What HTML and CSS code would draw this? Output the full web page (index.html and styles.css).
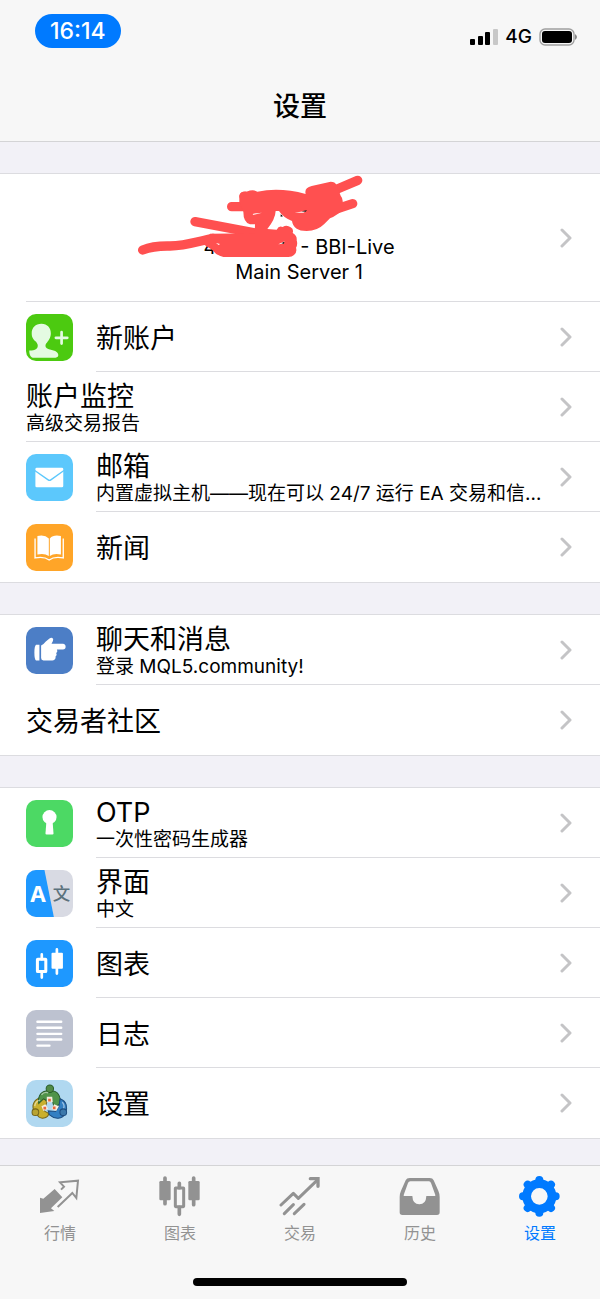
FILE: index.html
```html
<!DOCTYPE html>
<html lang="zh-CN">
<head>
  <meta charset="UTF-8" />
  <meta name="viewport" content="width=device-width, initial-scale=1" />
  <title>设置</title>
  <link rel="stylesheet" href="styles.css">
</head>
<body>
  <svg class="defs" width="0" height="0" aria-hidden="true">
    <symbol id="chevron" viewBox="0 0 12 20">
      <path d="M2 2l8 8-8 8" fill="none" stroke="#c4c4c6" stroke-width="3" stroke-linecap="round" stroke-linejoin="round" />
    </symbol>
  </svg>

  <header class="header">
    <div class="status">
      <span class="clock">16:14</span>
      <div class="signal">
        <svg width="28" height="18" viewBox="0 0 28 18">
          <rect x="0" y="11" width="5" height="6" rx="1" />
          <rect x="8" y="8" width="5" height="9" rx="1" />
          <rect x="15" y="4" width="5" height="13" rx="1" />
          <rect x="23" y="1" width="5" height="16" rx="1" fill="#c8c8c8" />
        </svg>
        <span>4G</span>
        <svg width="39" height="18" viewBox="0 0 39 18">
          <rect x="1" y="1" width="34" height="16" rx="5" fill="none" stroke="#a0a0a0" stroke-width="1.4" />
          <rect x="3" y="3" width="30" height="12" rx="3" />
          <path d="M36 6q4 3 0 6z" fill="#888" />
        </svg>
      </div>
    </div>
    <h1>设置</h1>
  </header>

  <main class="main">
    <section class="group">
      <a href="#" class="row account">
        <div class="body">
          <div class="info">
            <div class="name">&nbsp;</div>
            <div>4<span class="masked"></span>- BBI-Live</div>
            <div>Main Server 1</div>
          </div>
          <svg class="chev"><use href="#chevron" /></svg>
          <svg class="scribble" viewBox="0 27 870 363" aria-hidden="true">
            <g fill="none" stroke="#ff5050" stroke-linecap="round" stroke-linejoin="round">
              <path stroke-width="28" d="M68 255C90 246 110 242 150 243C200 242 235 228 280 220M225 170L400 203M335 125H420M372 94H400M645 75L713 46M640 135L698 116" />
            </g>
            <g fill="#ff5050">
              <path d="M358 92Q362 78 380 80Q400 72 412 80Q480 66 557 87Q552 68 575 63L632 50Q645 50 650 60L662 92Q672 104 666 120L680 125Q650 152 630 160L612 178Q592 198 560 198Q520 198 516 168Q490 158 477 138H467Q466 162 442 192L470 194Q477 180 488 186Q500 178 512 187Q522 192 518 204Q532 212 530 226Q534 238 528 248Q532 262 522 270Q515 277 502 276H310Q290 272 276 254L250 238L270 206L404 205L405 178H390Q370 172 370 140L358 112Z" />
            </g>
            <path d="M400 146L426 143L398 150zM524 143L560 137L550 143zM475 238L494 229L490 236zM288 234L300 237L296 240z" fill="#fff" />
            <path d="M482 148l7 6-7 1zM545 139l16-3-4 4zM484 235l9-5-1 6z" />
          </svg>
        </div>
      </a>
      <a href="#" class="row">
        <svg class="icon" viewBox="0 0 140 140">
          <rect width="140" height="140" rx="30" fill="#4cca10" />
          <path d="M46 29C64 29 74 42 74 57C74 72 66 80 60 88C57 93 57 99 62 102C72 108 94 107 96 121C97 127 94 130 88 130H20C11 130 9 112 10 109C20 109 31 107 34 100C37 94 34 89 30 83C22 76 17 70 17 57C17 41 28 29 46 29Z" fill="#e4fbe2" />
          <path d="M106 54v34M89 71h34" stroke="#e4fbe2" stroke-width="8" stroke-linecap="round" />
        </svg>
        <div class="body"><div class="text"><div class="title">新账户</div></div><svg class="chev"><use href="#chevron" /></svg></div>
      </a>
      <a href="#" class="row">
        <div class="body"><div class="text"><div class="title">账户监控</div><div class="sub">高级交易报告</div></div><svg class="chev"><use href="#chevron" /></svg></div>
      </a>
      <a href="#" class="row">
        <svg class="icon" viewBox="0 0 140 140">
          <rect width="140" height="140" rx="30" fill="#5cc8fc" />
          <rect x="28" y="41" width="83" height="58" rx="4" fill="#fff" />
          <path d="M26 49L66 77Q70 80 74 77L113 49" fill="none" stroke="#5cc8fc" stroke-width="4" />
        </svg>
        <div class="body"><div class="text"><div class="title">邮箱</div><div class="sub">内置虚拟主机——现在可以 24/7 运行 EA 交易和信…</div></div><svg class="chev"><use href="#chevron" /></svg></div>
      </a>
      <a href="#" class="row">
        <svg class="icon" viewBox="0 0 140 140">
          <rect width="140" height="140" rx="30" fill="#ffa528" />
          <path d="M34 36Q56 31 68 43V95Q54 86 34 91ZM104 36Q82 31 71 43V95Q84 86 104 91Z" fill="#fff" />
          <path d="M27 43V101Q54 96 69 107Q84 96 111 101V43" fill="none" stroke="#fff" stroke-width="4" />
        </svg>
        <div class="body"><div class="text"><div class="title">新闻</div></div><svg class="chev"><use href="#chevron" /></svg></div>
      </a>
    </section>

    <section class="group">
      <a href="#" class="row">
        <svg class="icon" viewBox="0 0 140 140">
          <rect width="140" height="140" rx="30" fill="#4c7ec6" />
          <path d="M30 53H40V100H30Q25 97 25 76Q25 57 30 53Z" fill="#fff" />
          <path d="M45 55Q53 51 59 43L70 34Q77 29 81 36Q82 41 76 50H110Q118 51 118 59Q118 67 110 67H92Q96 72 90 78Q94 83 88 88Q90 94 84 98Q80 100 72 100H52Q45 99 45 92Z" fill="#fff" />
        </svg>
        <div class="body"><div class="text"><div class="title">聊天和消息</div><div class="sub">登录 MQL5.community!</div></div><svg class="chev"><use href="#chevron" /></svg></div>
      </a>
      <a href="#" class="row">
        <div class="body"><div class="text"><div class="title">交易者社区</div></div><svg class="chev"><use href="#chevron" /></svg></div>
      </a>
    </section>

    <section class="group">
      <a href="#" class="row">
        <svg class="icon" viewBox="0 0 140 140">
          <rect width="140" height="140" rx="30" fill="#4cd964" />
          <circle cx="70" cy="51" r="21" fill="#fff" />
          <path d="M61 62H79L82 100Q82 103 79 103H61Q58 103 58 100Z" fill="#fff" />
        </svg>
        <div class="body"><div class="text"><div class="title">OTP</div><div class="sub">一次性密码生成器</div></div><svg class="chev"><use href="#chevron" /></svg></div>
      </a>
      <a href="#" class="row">
        <svg class="icon lang" viewBox="0 0 140 140">
          <rect width="140" height="140" fill="#d8dae3" />
          <path d="M0 0H55L83 140H0Z" fill="#1e98ff" />
          <text class="latin" x="36" y="95">A</text>
          <text class="han" x="106" y="88">文</text>
        </svg>
        <div class="body"><div class="text"><div class="title">界面</div><div class="sub">中文</div></div><svg class="chev"><use href="#chevron" /></svg></div>
      </a>
      <a href="#" class="row">
        <svg class="icon" viewBox="0 0 140 140">
          <rect width="140" height="140" rx="30" fill="#1e98ff" />
          <path d="M47 43V57M47 95V112M92 28V100" stroke="#fff" stroke-width="8" stroke-linecap="round" />
          <rect x="34" y="57" width="25" height="37" rx="1" fill="none" stroke="#fff" stroke-width="9" />
          <rect x="76" y="38" width="34" height="48" rx="3" fill="#fff" />
        </svg>
        <div class="body"><div class="text"><div class="title">图表</div></div><svg class="chev"><use href="#chevron" /></svg></div>
      </a>
      <a href="#" class="row">
        <svg class="icon" viewBox="0 0 140 140">
          <rect width="140" height="140" rx="30" fill="#bdc2d0" />
          <path d="M34 35H105M34 53H105M34 71H105M34 88H105M34 106H70" stroke="#fff" stroke-width="7" stroke-linecap="round" />
        </svg>
        <div class="body"><div class="text"><div class="title">日志</div></div><svg class="chev"><use href="#chevron" /></svg></div>
      </a>
      <a href="#" class="row">
        <svg class="icon" viewBox="0 0 140 140">
          <rect width="140" height="140" rx="30" fill="#b0d8f0" />
          <g stroke-width="3">
            <path d="M22 90C16 66 34 48 54 54L62 66L54 92L68 100C66 112 50 118 38 110Z" fill="#c9b02e" stroke="#75661a" />
            <path d="M38 70C34 44 48 30 71 32C94 30 106 48 100 72L84 82L78 60H60L52 56Z" fill="#4f934a" stroke="#285c2a" />
            <path d="M102 56C122 64 124 82 118 98C108 118 86 118 70 104L66 92L88 94L98 78Z" fill="#327fc2" stroke="#1c4d80" />
            <circle cx="71" cy="26" r="11" fill="#508a45" stroke="#285c2a" />
            <circle cx="28" cy="96" r="10" fill="#b8a331" stroke="#75661a" />
            <circle cx="111" cy="96" r="10" fill="#3b78aa" stroke="#1c4d80" />
          </g>
          <path d="M46 44Q54 34 66 38M26 78Q28 62 42 60M108 66Q116 76 112 84" fill="none" stroke="#fff" stroke-opacity=".5" stroke-width="4" />
          <path d="M62 50L78 50L80 66L62 66ZM46 78L58 72L66 86L52 92ZM76 86L84 72L98 78L90 92Z" fill="#f5eee0" />
          <path d="M66 56h8v8h-8zM52 80h8v8h-8zM80 79h8v8h-8z" fill="#e8683c" />
        </svg>
        <div class="body"><div class="text"><div class="title">设置</div></div><svg class="chev"><use href="#chevron" /></svg></div>
      </a>
    </section>
  </main>

  <nav class="tabbar">
    <div class="tabs">
      <a href="#" class="tab">
        <svg viewBox="0 0 126 126">
          <path d="M3 68L13 71L47 42L70 67L36 100L46 108L3 114Z" fill="currentColor" />
          <path d="M66 44L75 35L63 22L117 17L112 69L100 54L56 96" fill="none" stroke="currentColor" stroke-width="6" />
        </svg>
        <span>行情</span>
      </a>
      <a href="#" class="tab">
        <svg viewBox="0 0 126 126">
          <path d="M18 9V86M61 25V38M61 97V118M104 9V89" stroke="currentColor" stroke-width="11" stroke-linecap="round" />
          <rect x="1" y="18" width="34" height="58" rx="4" fill="currentColor" />
          <rect x="49" y="39" width="25" height="56" rx="1" fill="none" stroke="currentColor" stroke-width="9" />
          <rect x="88" y="18" width="34" height="58" rx="4" fill="currentColor" />
        </svg>
        <span>图表</span>
      </a>
      <a href="#" class="tab">
        <svg viewBox="0 0 126 126">
          <path d="M6 90L43 55L58 70L114 16M16 116L43 89M46 116L75 88" fill="none" stroke="currentColor" stroke-width="9" stroke-linecap="round" stroke-linejoin="round" />
          <path d="M94 11H117V34" fill="none" stroke="currentColor" stroke-width="10" stroke-linecap="round" />
        </svg>
        <span>交易</span>
      </a>
      <a href="#" class="tab">
        <svg viewBox="0 0 126 126">
          <path fill-rule="evenodd" d="M32 9H92Q101 9 104 16L118 47Q122 56 122 66V112Q122 120 114 120H10Q2 120 2 112V66Q2 56 6 47L20 16Q23 9 32 9ZM34 19Q29 19 27 24L14 60Q13 63 16 63H40Q41 88 61 88Q81 88 82 63H107Q110 63 109 60L96 24Q94 19 90 19Z" fill="currentColor" />
        </svg>
        <span>历史</span>
      </a>
      <a href="#" class="tab active">
        <svg viewBox="0 0 126 126">
          <g fill="none" stroke="currentColor">
            <circle cx="61" cy="64" r="38" stroke-width="26" />
            <path d="M61 15V22M61 106V113M12 64H19M103 64H110M26 29L31 34M91 94L96 99M96 29L91 34M26 99L31 94" stroke-width="24" stroke-linecap="round" />
          </g>
        </svg>
        <span>设置</span>
      </a>
    </div>
    <div class="home"></div>
  </nav>
</body>
</html>
```
FILE: styles.css
```css
* {
  box-sizing: border-box;
}
body {
  margin: 0;
  min-height: 100vh;
  display: flex;
  flex-direction: column;
  background: #f2f1f7;
  font-family: Inter, "Noto Sans CJK SC", sans-serif;
  color: #000;
}
a {
  color: inherit;
  text-decoration: none;
}
svg {
  display: block;
  flex-shrink: 0;
}
.defs {
  position: absolute;
}

/* header */
.header {
  background: #f7f7f7;
  border-bottom: 1px solid #d4d4d6;
}
.status {
  display: flex;
  justify-content: space-between;
  align-items: flex-start;
  padding: 14px 22px 0 35px;
}
.clock {
  padding: 0 15px;
  border-radius: 17px;
  background: #007aff;
  color: #fff;
  font-size: 23px;
  font-weight: 500;
  line-height: 34px;
}
.signal {
  display: flex;
  align-items: center;
  gap: 7px;
  padding-top: 12px;
  font-size: 19px;
  font-weight: 500;
  line-height: 22px;
}
h1 {
  margin: 0;
  padding-top: 24px;
  font-size: 27px;
  font-weight: 500;
  line-height: 69px;
  text-align: center;
}

/* list */
.main {
  flex: 1;
  padding-bottom: 26px;
}
.group {
  margin-top: 31px;
  background: #fff;
  border-top: 1px solid #dcdce0;
  border-bottom: 1px solid #dcdce0;
}
.row {
  display: flex;
  align-items: center;
  gap: 23px;
  padding-left: 26px;
}
.icon {
  width: 47px;
  height: 47px;
}
.body {
  flex: 1;
  min-width: 0;
  min-height: 70px;
  display: flex;
  align-items: center;
  gap: 12px;
  padding-right: 28px;
  border-bottom: 1px solid #dcdce0;
}
.row:last-child .body {
  border-bottom: none;
}
.text {
  flex: 1;
  min-width: 0;
  padding-top: 4px;
}
.title {
  font-size: 27px;
  line-height: 30px;
}
.sub {
  font-size: 19px;
  line-height: 24px;
  white-space: nowrap;
  overflow: hidden;
  text-overflow: ellipsis;
}
.chev {
  width: 12px;
  height: 20px;
}
.account .body {
  position: relative;
  min-height: 128px;
}
.info {
  flex: 1;
  padding-left: 24px;
  font-size: 20px;
  line-height: 25px;
  text-align: center;
}
.name {
  line-height: 44px;
}
.masked {
  display: inline-block;
  width: 84px;
}
.scribble {
  position: absolute;
  top: 0;
  left: calc(50% - 193px);
  width: 290px;
  height: 121px;
}
.lang {
  border-radius: 10px;
}
.lang text {
  text-anchor: middle;
}
.latin {
  font-size: 66px;
  font-weight: 700;
  fill: #fff;
}
.han {
  font-size: 52px;
  font-weight: 500;
  fill: #5b717c;
}

/* bottom tabs */
.tabbar {
  padding: 9px 0 13px;
  background: #f7f7f7;
  border-top: 1px solid #d4d4d6;
}
.tabs {
  display: flex;
}
.tab {
  flex: 1;
  display: flex;
  flex-direction: column;
  align-items: center;
  gap: 4px;
  color: #929292;
  font-size: 16px;
  line-height: 24px;
}
.tab svg {
  width: 42px;
  height: 42px;
}
.active {
  color: #007aff;
}
.home {
  width: 214px;
  height: 8px;
  margin: 33px auto 0;
  border-radius: 4px;
  background: #000;
}
```
